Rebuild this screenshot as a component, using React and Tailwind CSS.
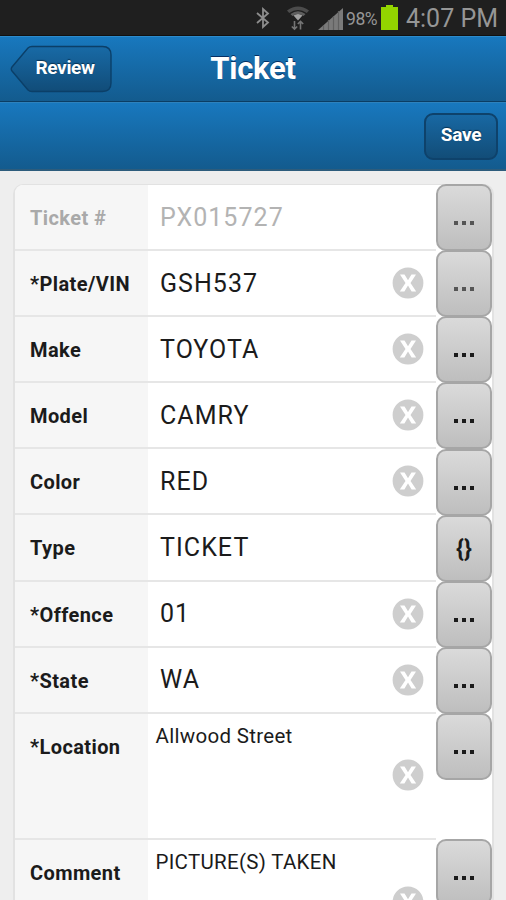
import React from 'react';
import clsx from 'clsx';

const fields = [
    { label: 'Ticket #', value: 'PX015727', disabled: true },
    { label: '*Plate/VIN', value: 'GSH537', clearable: true, dim: true },
    { label: 'Make', value: 'TOYOTA', clearable: true },
    { label: 'Model', value: 'CAMRY', clearable: true },
    { label: 'Color', value: 'RED', clearable: true },
    { label: 'Type', value: 'TICKET', action: 'braces' },
    { label: '*Offence', value: '01', clearable: true },
    { label: '*State', value: 'WA', clearable: true },
    { label: '*Location', value: 'Allwood Street', clearable: true, multiline: true },
    { label: 'Comment', value: 'PICTURE(S) TAKEN', clearable: true, multiline: true },
];

function StatusBar() {
    return (
        <div className="flex h-9 shrink-0 items-start border-b border-[#111] bg-[#1f1f1f] pl-[255px] text-[#969696]">
            <svg className="mt-[7px] h-[22px] w-4 shrink-0" viewBox="0 0 16 22" fill="none" stroke="#8d8d8d" strokeWidth="1.8">
                <path d="M2 6l11 9.5L8 20V2l5 4.5L2 16" />
            </svg>
            <svg className="ml-[15px] mt-[5px] h-[26px] w-6 shrink-0" viewBox="0 0 24 26" fill="none">
                <path d="M1 5.5Q12-2.5 23 5.5L20.8 8Q12 2 3.2 8Z" fill="#4c4c4c" />
                <path d="M4.5 9Q12 3.5 19.5 9L17.6 11Q12 7 6.4 11Z" fill="#5e5e5e" />
                <path d="M7.5 10.5Q12 7.5 16.5 10.5L12 15.5Z" fill="#a0a0a0" />
                <path d="M8.5 16v8M5.8 21.5l2.7 2.7 2.7-2.7M14.5 24.5v-8M11.8 19l2.7-2.7 2.7 2.7" stroke="#757575" strokeWidth="1.6" />
            </svg>
            <svg className="ml-[8px] mt-[8px] h-[22px] w-[25px] shrink-0" viewBox="0 0 25 22">
                <path d="M0 22L25 0V22Z" fill="#7a7a7a" />
                <path d="M5.5 17v5M10.5 12v10M15.5 8v14M20.5 3v19" stroke="#606060" strokeWidth="1.2" />
            </svg>
            <span className="ml-[3px] mt-[9px] w-[35px] shrink-0 whitespace-nowrap text-[17.5px] leading-5 tracking-[-0.4px]">98%</span>
            <svg className="mt-[5px] h-[25px] w-[17px] shrink-0" viewBox="0 0 17 25">
                <path d="M5 0h7v2h5v23H0V2h5z" fill="#93d500" />
            </svg>
            <span className="ml-[8px] mt-[4px] whitespace-nowrap text-[25px] leading-[30px]">4:07 PM</span>
        </div>
    );
}

function Header() {
    return (
        <>
            <div className="relative flex h-[66px] shrink-0 items-center justify-center border-b border-[#0b3d63] border-t border-t-[#2d8bcb] bg-linear-to-b from-[#1878be] to-[#135b8e]">
                <button className="absolute left-[10px] top-[8px] h-[48px] w-[102px]">
                    <svg className="absolute inset-0 h-full w-full" viewBox="0 0 102 48">
                        <defs>
                            <linearGradient id="back" x1="0" y1="0" x2="0" y2="1">
                                <stop offset="0" stopColor="#186aa6" />
                                <stop offset="1" stopColor="#114c78" />
                            </linearGradient>
                        </defs>
                        <path d="M22 1.5H92.5Q101 1.5 101 10V38Q101 46.5 92.5 46.5H22Q19.5 46.5 18 45L2 26Q.5 24 2 22L18 3Q19.5 1.5 22 1.5Z" fill="url(#back)" stroke="#0b3f68" strokeWidth="1.4" />
                    </svg>
                    <span className="absolute left-[25.5px] top-[11px] text-[19px] font-bold leading-6 tracking-[-0.35px] text-white [text-shadow:0_-1px_1px_#083354]">Review</span>
                </button>
                <h1 className="text-[31px] font-bold leading-9 tracking-[-0.3px] text-white [text-shadow:0_-1px_0_#062f63]">Ticket</h1>
            </div>
            <div className="flex h-[69px] shrink-0 items-start justify-end border-b-2 border-b-[#2d5c7c] border-t border-t-[#2d82bd] bg-linear-to-b from-[#1878be] to-[#135b8e] pr-[8px] pt-[10px]">
                <button className="h-[47px] w-[74px] rounded-[9px] border-2 border-[#0e426b] bg-linear-to-b from-[#1868a3] to-[#124d78] pb-[3px] text-[19px] font-bold leading-6 tracking-[-0.3px] text-white [text-shadow:0_-1px_1px_#083354]">Save</button>
            </div>
        </>
    );
}

function ClearIcon() {
    return (
        <svg className="h-8 w-8" viewBox="0 0 32 32">
            <circle cx="16" cy="16" r="15.4" fill="#cecece" />
            <path d="M8 7.5H12.5L16 13.3L19.5 7.5H24L18.5 16L24.2 24.5H19.6L16 18.6L12.4 24.5H7.8L13.5 16Z" fill="white" />
        </svg>
    );
}

function ActionButton({ action, dim }) {
    return (
        <button className="h-[67px] w-14 shrink-0 rounded-[10px] border-2 border-[#a6a6a6] bg-linear-to-b from-[#dadada] to-[#bebebe]">
            {action === 'braces' ? (
                <span className="block pt-[1px] text-center text-[24px] font-bold leading-6 text-[#1b1b1b]">{'{}'}</span>
            ) : (
                <span className={clsx('mt-[11px] flex justify-center gap-1', dim ? 'text-[#555]' : 'text-[#1b1b1b]')}>
                    <i className="size-1 bg-current" />
                    <i className="size-1 bg-current" />
                    <i className="size-1 bg-current" />
                </span>
            )}
        </button>
    );
}

function FieldRow({ field }) {
    const { label, value, disabled, clearable, multiline, dim, action } = field;
    return (
        <div className={clsx('flex', multiline ? 'h-[126.5px]' : 'h-[66.1px]')}>
            <div className={clsx('w-[133px] shrink-0 border-b-2 border-[#e6e6e6] bg-[#f6f6f6] pl-[15px] pt-[21px] text-[20px] font-bold leading-6 tracking-[0.4px]', disabled ? 'rounded-tl-[8px] text-[#a9a9a9]' : 'text-[#1b1b1b]')}>
                {label}
            </div>
            <div className={clsx('relative min-w-0 flex-1 whitespace-nowrap border-b-2 border-[#e6e6e6]', multiline ? 'pl-[7.5px] pt-[10px] text-[20.5px] leading-6 tracking-[0.3px]' : 'pl-[12px] pt-[17.5px] text-[25px] leading-[30px] tracking-[1.05px]', disabled ? 'text-[#b3b3b3]' : 'text-[#1b1b1b]')}>
                {value}
                {clearable && (
                    <button className={clsx('absolute right-[12.5px]', multiline ? 'top-[45.5px]' : 'top-[16px]')}>
                        <ClearIcon />
                    </button>
                )}
            </div>
            <div className="-mt-[0.8px] w-14 shrink-0">
                <ActionButton action={action} dim={disabled || dim} />
            </div>
        </div>
    );
}

export default function App() {
    return (
        <div className="flex h-[900px] w-[506px] flex-col overflow-hidden bg-[#eee] font-['Roboto',sans-serif]">
            <StatusBar />
            <Header />
            <main className="ml-[13px] mt-[13px] h-[760px] w-[481px] shrink-0 self-start rounded-t-[10px] border-2 border-t border-[#e2e2e2] bg-white">
                {fields.map((field) => (
                    <FieldRow key={field.label} field={field} />
                ))}
            </main>
        </div>
    );
}
